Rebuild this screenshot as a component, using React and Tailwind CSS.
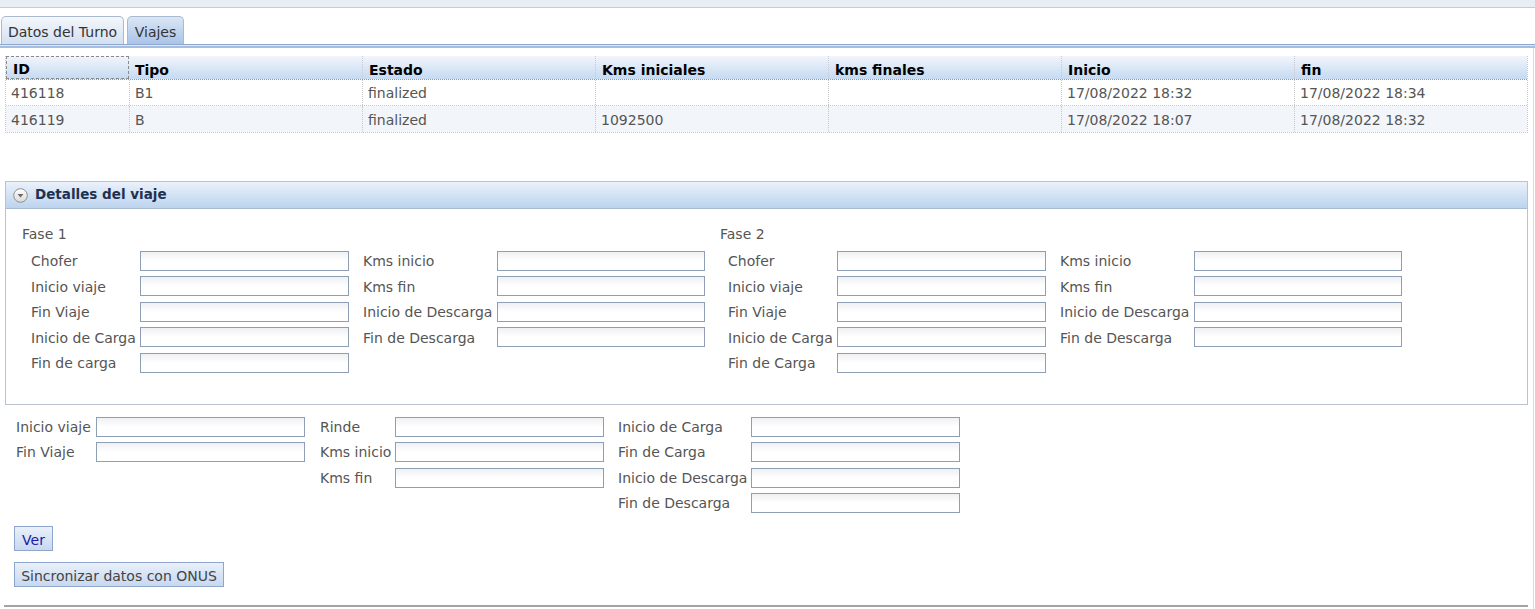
import React from "react";

const FONT = { fontFamily: '"DejaVu Sans", Verdana, sans-serif' };

function Input({ w = "w-[209px]" }) {
  return (
    <div
      className={`${w} h-[20px] border border-[#8e9fb5] bg-linear-to-b from-[#eff0f3] via-white to-white shrink-0`}
    />
  );
}

function Row({ items }) {
  return (
    <div className="flex items-center h-[25.5px]">
      {items.map((it, i) => (
        <React.Fragment key={i}>
          <div className={`${it.lw} shrink-0 whitespace-nowrap text-[#555]`}>{it.label}</div>
          <Input w={it.iw} />
          {it.gap ? <div className={`${it.gap} shrink-0`} /> : null}
        </React.Fragment>
      ))}
    </div>
  );
}

function Fase({ title, left, ml }) {
  const L = ["Chofer", "Inicio viaje", "Fin Viaje", "Inicio de Carga", left];
  const R = ["Kms inicio", "Kms fin", "Inicio de Descarga", "Fin de Descarga"];
  return (
    <div className="w-[698px] shrink-0">
      <div className="h-[18px] flex items-center text-[#555]">{title}</div>
      <div className={`${ml} mt-[5px]`}>
        {L.map((l, i) => (
          <div key={i} className="flex items-center h-[25.5px]">
            <div className="w-[109px] shrink-0 whitespace-nowrap text-[#555] pt-[1px]">{l}</div>
            <Input w="w-[209px]" />
            {R[i] ? (
              <>
                <div className="w-[14px] shrink-0" />
                <div className="w-[134px] shrink-0 whitespace-nowrap text-[#555] pt-[1px]">{R[i]}</div>
                <Input w="w-[208px]" />
              </>
            ) : null}
          </div>
        ))}
      </div>
    </div>
  );
}

const cols = [
  { h: "ID", w: "w-[123px]" },
  { h: "Tipo", w: "w-[233px]" },
  { h: "Estado", w: "w-[233px]" },
  { h: "Kms iniciales", w: "w-[233px]" },
  { h: "kms finales", w: "w-[233px]" },
  { h: "Inicio", w: "w-[233px]" },
  { h: "fin", w: "flex-1" },
];

const rows = [
  ["416118", "B1", "finalized", "", "", "17/08/2022 18:32", "17/08/2022 18:34"],
  ["416119", "B", "finalized", "1092500", "", "17/08/2022 18:07", "17/08/2022 18:32"],
];

export default function App() {
  return (
    <div className="relative w-[1535px] h-[609px] bg-white overflow-hidden text-[14px] leading-none" style={FONT}>
      {/* top strip */}
      <div className="h-[8px] bg-[#e9edf4] border-b border-[#c2cddd]" />
      {/* tabs */}
      <div className="flex items-end gap-[3px] pl-[1px] pt-[8px]">
        <div className="h-[28px] w-[123px] pt-[3px] rounded-t-[5px] border border-b-0 border-[#a9b9cf] bg-linear-to-b from-[#f4f7fb] to-[#d3e0f1] flex items-center justify-center text-[#333]">
          Datos del Turno
        </div>
        <div className="h-[28px] w-[57px] pt-[3px] rounded-t-[5px] border border-b-0 border-[#a9b9cf] bg-linear-to-b from-[#dbe6f5] to-[#a9c3e8] flex items-center justify-center text-[#333]">
          Viajes
        </div>
      </div>
      <div className="h-[1px] bg-[#8fa8cf]" />
      <div className="h-[1px] bg-[#dfe7f3]" />
      <div className="h-[2px] bg-[#a6bde2]" />

      <div className="border-r border-[#dcdcdc] w-[1534px] h-[561px] pt-[8px]">
        {/* grid */}
        <div className="ml-[5px] w-[1523px] border border-dotted border-[#c8c8c8] border-t-0">
          <div className="flex h-[24px] bg-linear-to-b from-[#f2f5fb] to-[#c5daf2] border-b border-dotted border-[#999]">
            {cols.map((c, i) => (
              <div
                key={i}
                className={`${c.w} shrink-0 flex items-end pb-[2px] pl-[6px] font-bold text-black ${
                  i === 0 ? "border border-dashed border-[#8a8a8a]" : "border-l border-dotted border-[#c4cbd6]"
                } ${i === 1 ? "border-l-0" : ""}`}
              >
                {c.h}
              </div>
            ))}
          </div>
          {rows.map((r, ri) => (
            <div
              key={ri}
              className={`flex h-[26px] ${ri === 1 ? "bg-[#f2f5fa]" : "bg-white"} ${
                ri === 0 ? "border-b border-dotted border-[#c8c8c8]" : ""
              }`}
            >
              {r.map((v, ci) => (
                <div
                  key={ci}
                  className={`${cols[ci].w} shrink-0 flex items-center pl-[5px] pt-[1px] text-[#555] ${
                    ci > 0 ? "border-l border-dotted border-[#c8c8c8]" : ""
                  }`}
                >
                  {v}
                </div>
              ))}
            </div>
          ))}
        </div>

        {/* panel */}
        <div className="ml-[5px] mt-[48px] w-[1523px] border border-[#b9c2cf]">
          <div className="h-[27px] flex items-center bg-linear-to-b from-[#eaf1fb] to-[#bcd4ee] border-b border-[#a9bbd4] pl-[7px]">
            <svg width="15" height="15" viewBox="0 0 15 15" className="shrink-0">
              <defs>
                <linearGradient id="cg" x1="0" y1="0" x2="0" y2="1">
                  <stop offset="0" stopColor="#ffffff" />
                  <stop offset="1" stopColor="#d9d9d9" />
                </linearGradient>
              </defs>
              <circle cx="7.5" cy="7.5" r="6.8" fill="url(#cg)" stroke="#8f8f8f" strokeWidth="1" />
              <path d="M4.5 6 L10.5 6 L7.5 9.6 Z" fill="#6a6a6a" />
            </svg>
            <span className="ml-[7px] font-bold text-[#1f3050] text-[13.5px]">Detalles del viaje</span>
          </div>
          <div className="h-[195px] pl-[16px] pt-[16px] flex">
            <Fase title="Fase 1" left="Fin de carga" ml="ml-[9px]" />
            <Fase title="Fase 2" left="Fin de Carga" ml="ml-[8px]" />
          </div>
        </div>

        {/* bottom form */}
        <div className="ml-[16px] mt-[9px] flex">
          <div>
            <Row items={[{ label: "Inicio viaje", lw: "w-[80px]", iw: "w-[209px]", gap: "w-[15px]" }]} />
            <Row items={[{ label: "Fin Viaje", lw: "w-[80px]", iw: "w-[209px]", gap: "w-[15px]" }]} />
          </div>
          <div>
            <Row items={[{ label: "Rinde", lw: "w-[75px]", iw: "w-[209px]", gap: "w-[14px]" }]} />
            <Row items={[{ label: "Kms inicio", lw: "w-[75px]", iw: "w-[209px]", gap: "w-[14px]" }]} />
            <Row items={[{ label: "Kms fin", lw: "w-[75px]", iw: "w-[209px]", gap: "w-[14px]" }]} />
          </div>
          <div>
            <Row items={[{ label: "Inicio de Carga", lw: "w-[133px]", iw: "w-[209px]" }]} />
            <Row items={[{ label: "Fin de Carga", lw: "w-[133px]", iw: "w-[209px]" }]} />
            <Row items={[{ label: "Inicio de Descarga", lw: "w-[133px]", iw: "w-[209px]" }]} />
            <Row items={[{ label: "Fin de Descarga", lw: "w-[133px]", iw: "w-[209px]" }]} />
          </div>
        </div>

        <div className="ml-[14px] mt-[10px] flex flex-col items-start gap-[11px]">
          <button className="h-[25px] w-[39px] pt-[2px] border border-[#8ea6cb] bg-linear-to-b from-[#e9f0fa] to-[#c7d8f0] text-[#1a1aa6] flex items-center justify-center">
            Ver
          </button>
          <button className="h-[25px] w-[210px] pt-[2px] border border-[#8ea6cb] bg-linear-to-b from-[#e9f0fa] to-[#c7d8f0] text-[#444] flex items-center justify-center">
            Sincronizar datos con ONUS
          </button>
        </div>
      </div>
      <div className="absolute left-[4px] top-[605px] w-[1524px] h-[2px] bg-[#a3a3a3]" />
    </div>
  );
}
